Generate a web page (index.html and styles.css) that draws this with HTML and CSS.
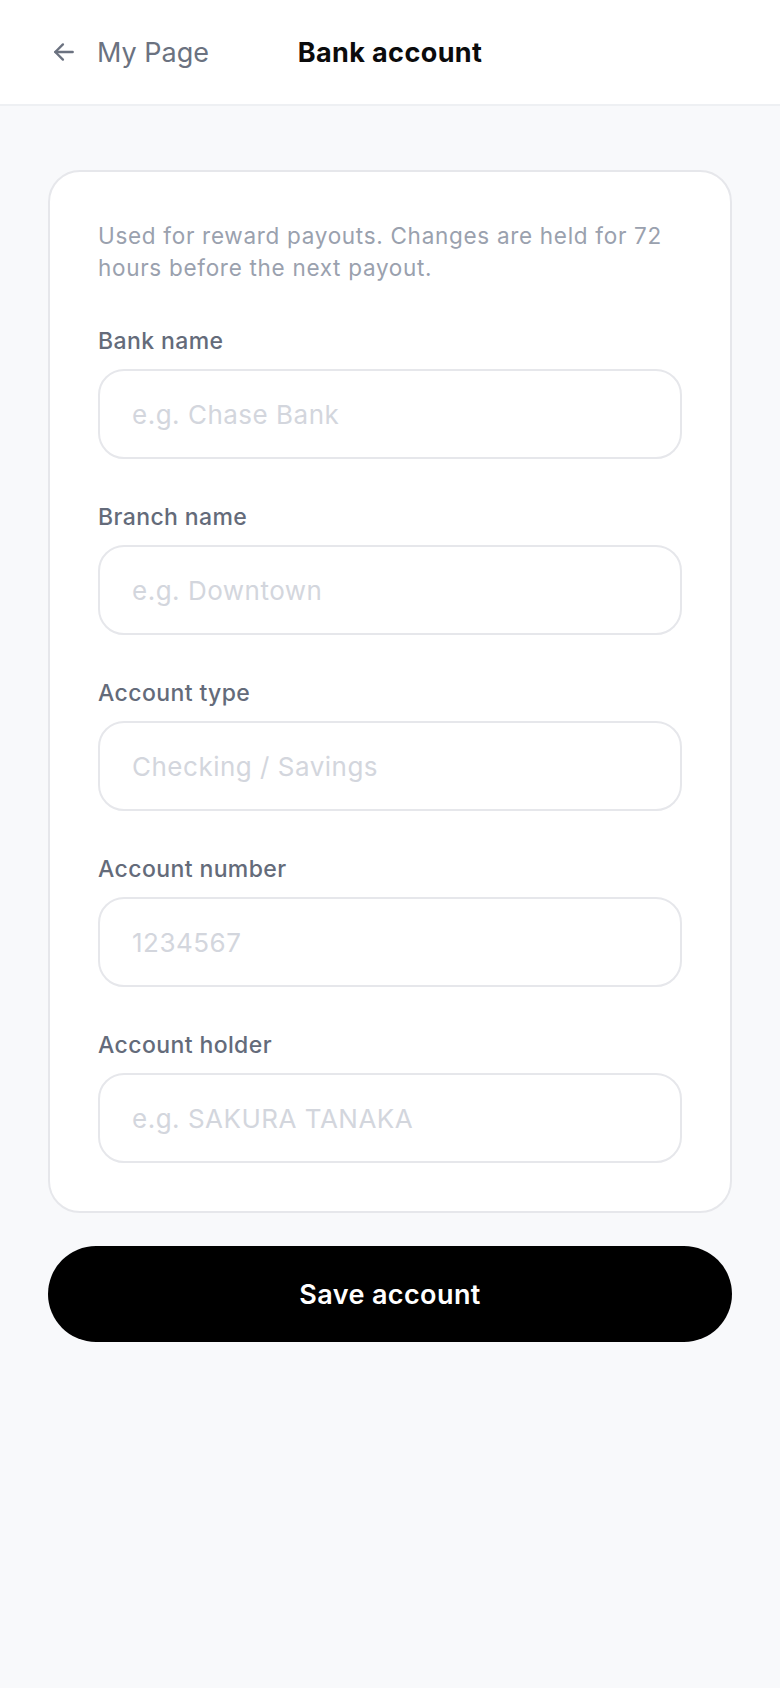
FILE: index.html
```html
<!DOCTYPE html>
<html lang="en">
<head>
<meta charset="utf-8">
<title>Bank account</title>
<link rel="stylesheet" href="styles.css">
</head>
<body>
<header class="topbar">
  <a class="back" href="#">
    <svg class="back-icon" viewBox="0 0 24 24" width="24" height="24" fill="none" stroke="currentColor" stroke-width="2.2" stroke-linecap="round" stroke-linejoin="round"><path d="M20 12H4"/><path d="M11 5l-7 7 7 7"/></svg>
    <span>My Page</span>
  </a>
  <h1 class="title">Bank account</h1>
  <div class="spacer"></div>
</header>
<main class="content">
  <section class="card">
    <p class="note">Used for reward payouts. Changes are held for 72 hours before the next payout.</p>
    <div class="fields">
      <label class="field">
        <span class="label">Bank name</span>
        <input class="input" type="text" placeholder="e.g. Chase Bank">
      </label>
      <label class="field">
        <span class="label">Branch name</span>
        <input class="input" type="text" placeholder="e.g. Downtown">
      </label>
      <label class="field">
        <span class="label">Account type</span>
        <input class="input" type="text" placeholder="Checking / Savings">
      </label>
      <label class="field">
        <span class="label">Account number</span>
        <input class="input" type="text" placeholder="1234567">
      </label>
      <label class="field">
        <span class="label">Account holder</span>
        <input class="input" type="text" placeholder="e.g. SAKURA TANAKA">
      </label>
    </div>
  </section>
  <button class="save" type="button">Save account</button>
</main>
</body>
</html>
```

FILE: styles.css
```css
* { box-sizing: border-box; }
html, body { margin: 0; padding: 0; }
body {
  font-family: Inter, "Noto Sans", "Liberation Sans", sans-serif;
  background: #f8f9fb;
  min-height: 1688px;
  color: #111;
}
.topbar {
  height: 106px;
  background: #fff;
  border-bottom: 2px solid #eef0f3;
  display: grid;
  grid-template-columns: 1fr auto 1fr;
  align-items: center;
  padding: 0 53px;
}
.back {
  display: flex;
  align-items: center;
  gap: 20px;
  color: #6b7280;
  text-decoration: none;
  font-size: 27px;
  font-weight: 400;
}
.back-icon { width: 26px; height: 26px; margin-left: -2px; }
.title {
  margin: 0;
  font-size: 27px;
  letter-spacing: 0.4px;
  font-weight: 700;
  color: #0b0b0c;
}
.content {
  padding: 64px 48px 0;
  display: flex;
  flex-direction: column;
  gap: 33px;
}
.card {
  background: #fff;
  border: 2px solid #e6e7eb;
  border-radius: 32px;
  padding: 48px 48px 48px;
}
.note {
  margin: 0 0 41px;
  font-size: 22.5px;
  letter-spacing: 0.7px;
  line-height: 32px;
  color: #9aa1ae;
}
.fields {
  display: flex;
  flex-direction: column;
  gap: 42px;
}
.field {
  display: flex;
  flex-direction: column;
  gap: 12px;
}
.label {
  font-size: 23px;
  letter-spacing: 0.4px;
  line-height: 32px;
  font-weight: 500;
  color: #646b7a;
}
.input {
  height: 90px;
  width: 100%;
  border: 2px solid #e6e7eb;
  border-radius: 26px;
  padding: 0 32px;
  font-family: inherit;
  font-size: 26px;
  letter-spacing: 0.5px;
  color: #111;
  background: #fff;
  outline: none;
}
.input::placeholder { color: #d3d6dd; }
.save {
  height: 96px;
  border: 0;
  border-radius: 48px;
  background: #000;
  color: #fff;
  font-family: inherit;
  font-size: 27px;
  letter-spacing: 0.4px;
  font-weight: 600;
}
```
